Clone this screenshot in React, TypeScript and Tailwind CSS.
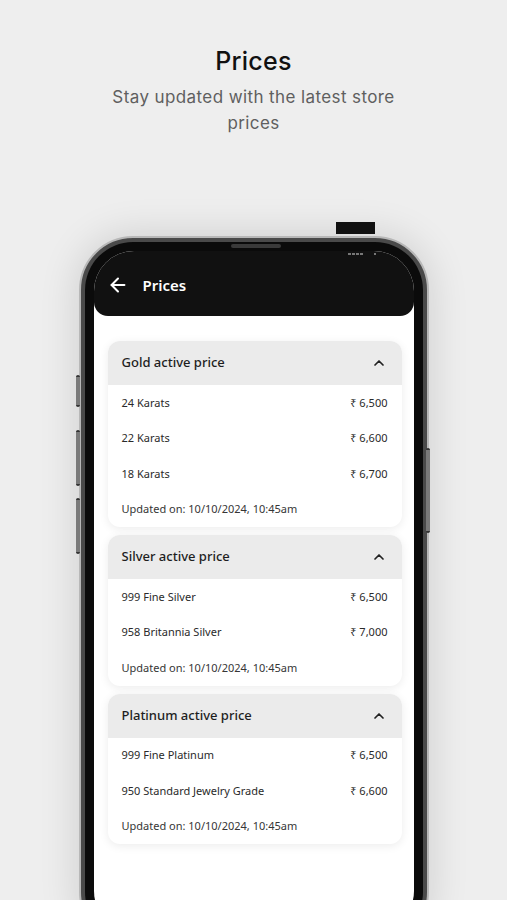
import { ArrowLeft, ChevronUp } from "lucide-react";

interface PriceRow {
  label: string;
  price: string;
}

interface PriceCard {
  title: string;
  rows: PriceRow[];
  updated: string;
}

const cards: PriceCard[] = [
  {
    title: "Gold active price",
    rows: [
      { label: "24 Karats", price: "₹ 6,500" },
      { label: "22 Karats", price: "₹ 6,600" },
      { label: "18 Karats", price: "₹ 6,700" },
    ],
    updated: "Updated on: 10/10/2024, 10:45am",
  },
  {
    title: "Silver active price",
    rows: [
      { label: "999 Fine Silver", price: "₹ 6,500" },
      { label: "958 Britannia Silver", price: "₹ 7,000" },
    ],
    updated: "Updated on: 10/10/2024, 10:45am",
  },
  {
    title: "Platinum active price",
    rows: [
      { label: "999 Fine Platinum", price: "₹ 6,500" },
      { label: "950 Standard Jewelry Grade", price: "₹ 6,600" },
    ],
    updated: "Updated on: 10/10/2024, 10:45am",
  },
];

function PriceAccordion({ card }: { card: PriceCard }) {
  return (
    <div className="bg-white rounded-xl overflow-hidden shadow-[0_2px_10px_rgba(0,0,0,0.08)]">
      {/* Header */}
      <div className="h-[44px] bg-[#ebebeb] flex items-center justify-between pl-[14px] pr-[15px]">
        <span className="text-[13px] font-medium text-[#1e1e1e]">{card.title}</span>
        <ChevronUp size={16} strokeWidth={2.6} className="text-[#222]" />
      </div>
      {/* Rows */}
      {card.rows.map((row) => (
        <div
          key={row.label}
          className="h-[35.5px] flex items-center justify-between px-[14px] text-[11px] text-[#2a2a2a]"
        >
          <span>{row.label}</span>
          <span>{row.price}</span>
        </div>
      ))}
      <div className="h-[35.5px] flex items-center px-[14px] text-[11px] text-[#363636]">
        {card.updated}
      </div>
    </div>
  );
}

export default function App() {
  return (
    <div className="w-full h-[900px] bg-[#eeeeee] overflow-hidden flex flex-col items-center font-['Inter',sans-serif]">
      {/* Page heading */}
      <h1 className="mt-[45px] text-[25px] leading-[32px] font-medium tracking-[0.3px] text-[#111]">Prices</h1>
      <p className="mt-[7px] w-[310px] text-center text-[17px] leading-[26px] tracking-[0.4px] text-[#5f5f5f]">
        Stay updated with the latest store prices
      </p>

      {/* Phone */}
      <div className="relative mt-[100px] w-[350px] shrink-0">
        {/* top black tab */}
        <div className="absolute -top-[14px] left-[257px] w-[39px] h-[12px] bg-[#111]" />
        {/* side buttons */}
        <div className="absolute left-[-3px] top-[139px] w-[4px] h-[32px] rounded-sm bg-[#7a7a7a] border-y-2 border-[#333]" />
        <div className="absolute left-[-3px] top-[194px] w-[4px] h-[56px] rounded-sm bg-[#7a7a7a] border-y-2 border-[#333]" />
        <div className="absolute left-[-3px] top-[262px] w-[4px] h-[56px] rounded-sm bg-[#7a7a7a] border-y-2 border-[#333]" />
        <div className="absolute right-[-1px] top-[212px] w-[4px] h-[85px] rounded-sm bg-[#7a7a7a] border-y-2 border-[#333]" />

        <div className="rounded-[54px] border-2 border-[#b8b8b8] bg-[#4a4a4a] p-[4px] shadow-[0_0_40px_rgba(0,0,0,0.14)]">
          <div className="relative rounded-[48px] bg-[#0b0b0b] p-[9px]">
            {/* speaker */}
            <div className="absolute top-[2px] left-[146px] w-[50px] h-[4px] rounded-full bg-[#3a3a3a]" />
            {/* status marks */}
            <div className="absolute top-[11px] left-[263px] flex items-center gap-[1px] z-10">
              <div className="w-[3px] h-[2px] bg-[#777]" />
              <div className="w-[3px] h-[2px] bg-[#777]" />
              <div className="w-[3px] h-[2px] bg-[#777]" />
              <div className="w-[3px] h-[2px] bg-[#777]" />
              <div className="ml-[10px] w-[2px] h-[2px] bg-[#777]" />
            </div>

            {/* Screen */}
            <div className="h-[680px] rounded-[40px] bg-white overflow-hidden font-['Noto_Sans',sans-serif]">
              <div className="h-[65px] bg-[#111] rounded-b-[14px] pt-[24px] pl-[13px] flex items-start gap-[14px]">
                <div className="h-[20px] flex items-center">
                  <ArrowLeft size={22} strokeWidth={2.2} className="text-white" />
                </div>
                <span className="h-[20px] leading-[20px] text-[15px] font-semibold text-white">Prices</span>
              </div>

              <div className="pt-[25px] pl-[14px] pr-[12px] flex flex-col gap-[8px]">
                {cards.map((c) => (
                  <PriceAccordion key={c.title} card={c} />
                ))}
              </div>
            </div>
          </div>
        </div>
      </div>
    </div>
  );
}
